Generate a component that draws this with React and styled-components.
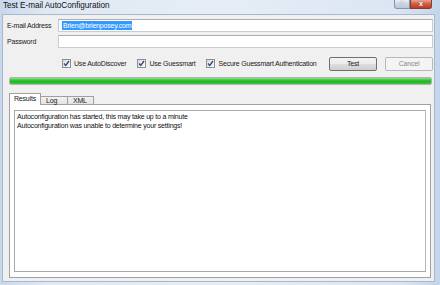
import React from "react";
import styled, { createGlobalStyle } from "styled-components";

const Global = createGlobalStyle`
  html, body { margin: 0; padding: 0; background: #fff; }
  body { width: 440px; height: 285px; overflow: hidden; }
  * { box-sizing: border-box; }
`;

const Window = styled.div`
  width: 440px;
  height: 285px;
  display: flex;
  flex-direction: column;
  background: linear-gradient(90deg, #c7d8ec 0%, #dfe8f3 10%, #e6edf6 50%, #dbe6f2 90%, #c3d5ea 100%);
  font-family: "Liberation Sans", Arial, sans-serif;
  color: #1a1a1a;
  overflow: hidden;
  white-space: nowrap;
`;

const TitleBar = styled.div`
  height: 14px;
  flex: none;
  display: flex;
  align-items: flex-start;
  padding-left: 3px;
`;

const Title = styled.div`
  font-size: 8.2px;
  line-height: 12px;
  color: #111;
  letter-spacing: -0.05px;
`;

const Caption = styled.div`
  margin-left: auto;
  margin-right: 8px;
  display: flex;
`;

const CapBtn = styled.div`
  width: ${(p) => p.$w}px;
  height: 9px;
  border: 1px solid ${(p) => (p.$red ? "#8a3a2c" : "#8396b0")};
  border-top: none;
  background: ${(p) =>
    p.$red
      ? "linear-gradient(#e8a493, #d35a3f 50%, #c43b1f)"
      : "linear-gradient(#e9eef5, #c9d5e4 50%, #b9c8da)"};
  border-radius: ${(p) => (p.$red ? "0 0 3px 0" : "0 0 0 3px")};
  color: #fff;
  font-size: 7px;
  font-weight: bold;
  line-height: 7px;
  text-align: center;
  text-shadow: 0 0 1px #555;
`;

const Client = styled.div`
  flex: 1;
  margin: 0 5px 3px 2px;
  background: #f0f0f0;
  border: 1px solid #a7b8cd;
  display: flex;
  flex-direction: column;
  padding: 4px 1px 2px 3px;
  font-size: 7px;
  letter-spacing: -0.2px;
`;

const Row = styled.div`
  display: flex;
  align-items: center;
  height: 13px;
  margin-bottom: ${(p) => p.$mb || 0}px;
`;

const Label = styled.div`
  width: 52px;
  padding-left: 1px;
`;

const Input = styled.div`
  flex: 1;
  height: 13px;
  background: #fff;
  border: 1px solid #c6cdd6;
  border-top-color: #abadb3;
  display: flex;
  align-items: center;
  padding-left: 3px;
`;

const Selected = styled.span`
  background: #3399ff;
  color: #fff;
  padding: 0 1px;
  line-height: 9px;
`;

const OptionsRow = styled.div`
  display: flex;
  align-items: center;
  height: 15px;
  margin-top: 8px;
  padding-left: 56px;
`;

const Check = styled.label`
  flex: none;
  display: flex;
  align-items: center;
  margin-right: ${(p) => p.$mr}px;
`;

const Box = styled.span`
  flex: none;
  width: 9px;
  height: 9px;
  border: 1px solid #8e8f8f;
  background: linear-gradient(135deg, #dcdcdc, #fbfbfb);
  margin-right: 3px;
  display: flex;
  align-items: center;
  justify-content: center;
`;

const Button = styled.div`
  flex: none;
  width: 48px;
  height: 14px;
  border: 1px solid ${(p) => (p.$disabled ? "#b5b9bd" : "#707070")};
  border-radius: 2px;
  background: ${(p) =>
    p.$disabled ? "#f4f4f4" : "linear-gradient(#f3f3f3 0%, #ebebeb 50%, #dddddd 51%, #cfcfcf 100%)"};
  color: ${(p) => (p.$disabled ? "#8a8a8a" : "#1a1a1a")};
  display: flex;
  align-items: center;
  justify-content: center;
  margin-left: ${(p) => (p.$auto ? "auto" : `${p.$ml}px`)};
`;

const Progress = styled.div`
  height: 8px;
  margin: 6px 1px 0 3px;
  border: 1px solid #b2b2b2;
  border-radius: 2px;
  background: linear-gradient(#8fe08f 0%, #37c737 35%, #1fb51f 65%, #48c848 100%);
`;

const Tabs = styled.div`
  display: flex;
  align-items: flex-end;
  height: 11px;
  margin: 8px 0 0 3px;
  position: relative;
  z-index: 1;
`;

const Tab = styled.div`
  width: ${(p) => p.$w}px;
  height: ${(p) => (p.$active ? 12 : 8)}px;
  border: 1px solid #a0a0a0;
  border-bottom: none;
  border-left: ${(p) => (p.$active ? "1px solid #a0a0a0" : "none")};
  background: ${(p) => (p.$active ? "#fff" : "linear-gradient(#f2f2f2, #e3e3e3)")};
  padding-left: ${(p) => p.$pl}px;
  line-height: ${(p) => (p.$active ? 10 : 8)}px;
  margin-bottom: ${(p) => (p.$active ? -1 : 0)}px;
  overflow: visible;
`;

const Panel = styled.div`
  flex: 1;
  margin: 0 2px 1px 3px;
  border: 1px solid #a0a0a0;
  background: #fff;
  padding: 5px 4px 5px 4px;
  display: flex;
`;

const TextArea = styled.div`
  flex: 1;
  border: 1px solid #a9a9a9;
  border-right-color: #b8b8b8;
  padding: 2px 2px;
  line-height: 8.6px;
  color: #111;
`;

const CheckMark = () => (
  <svg width="7" height="7" viewBox="0 0 7 7">
    <path d="M1 3.5 L2.8 5.5 L6 1" fill="none" stroke="#2b4a7a" strokeWidth="1.3" />
  </svg>
);

export default function App() {
  return (
    <>
      <Global />
      <Window>
        <TitleBar>
          <Title>Test E-mail AutoConfiguration</Title>
          <Caption>
            <CapBtn $w={16}>?</CapBtn>
            <CapBtn $w={22} $red>x</CapBtn>
          </Caption>
        </TitleBar>
        <Client>
          <Row $mb={3}>
            <Label>E-mail Address</Label>
            <Input>
              <Selected>Brien@brienposey.com</Selected>
            </Input>
          </Row>
          <Row>
            <Label>Password</Label>
            <Input />
          </Row>
          <OptionsRow>
            <Check $mr={11}>
              <Box><CheckMark /></Box>Use AutoDiscover
            </Check>
            <Check $mr={11}>
              <Box><CheckMark /></Box>Use Guessmart
            </Check>
            <Check $mr={0}>
              <Box><CheckMark /></Box>Secure Guessmart Authentication
            </Check>
            <Button $auto>Test</Button>
            <Button $ml={8} $disabled>Cancel</Button>
          </OptionsRow>
          <Progress />
          <Tabs>
            <Tab $w={32} $active $pl={4}>Results</Tab>
            <Tab $w={27} $pl={5}>Log</Tab>
            <Tab $w={26} $pl={5}>XML</Tab>
          </Tabs>
          <Panel>
            <TextArea>
              Autoconfiguration has started, this may take up to a minute
              <br />
              Autoconfiguration was unable to determine your settings!
            </TextArea>
          </Panel>
        </Client>
      </Window>
    </>
  );
}
